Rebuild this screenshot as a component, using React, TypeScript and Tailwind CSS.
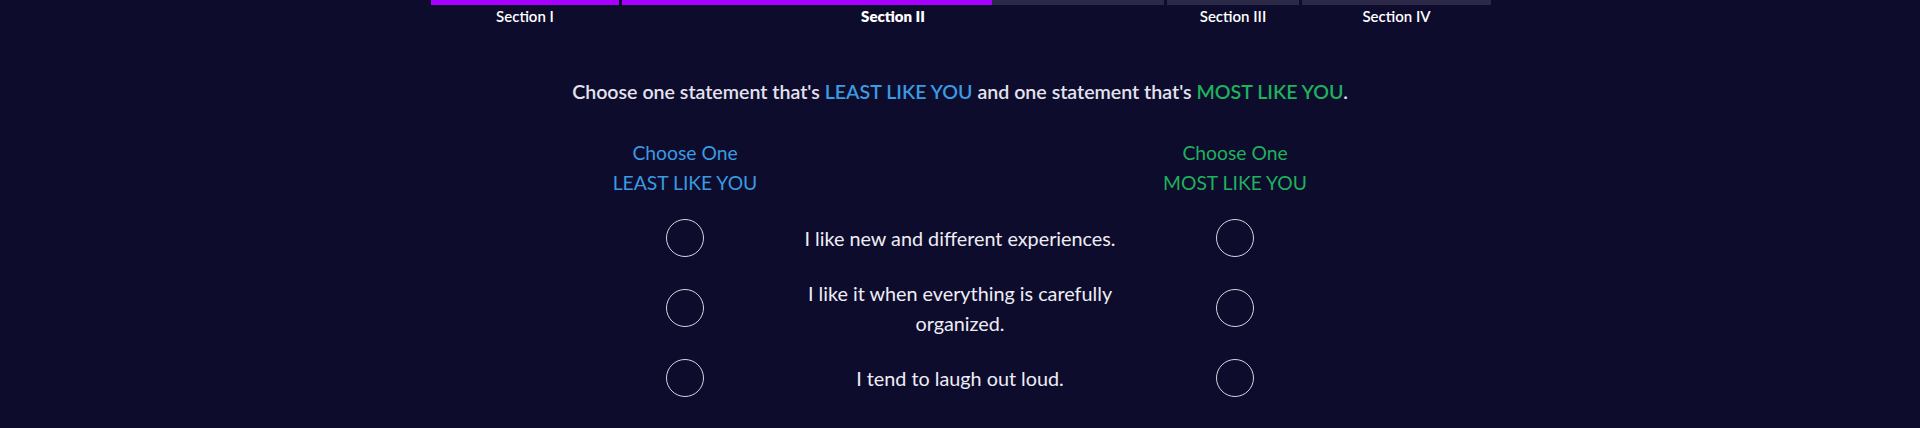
import React from "react";

const sections = [
  { label: "Section I", width: 188, fill: 100, active: false },
  { label: "Section II", width: 542, fill: 68.3, active: true },
  { label: "Section III", width: 132, fill: 0, active: false },
  { label: "Section IV", width: 189, fill: 0, active: false },
];

const statements = [
  "I like new and different experiences.",
  "I like it when everything is carefully organized.",
  "I tend to laugh out loud.",
];

function Circle() {
  return (
    <button
      type="button"
      className="w-[38px] h-[38px] rounded-full border border-[#d6d5e2] bg-transparent"
    />
  );
}

export default function App() {
  return (
    <div
      className="w-full h-[428px] bg-[#0e0c2d] text-[#e6e5f0] overflow-hidden"
      style={{ fontFamily: "Lato, 'Open Sans', sans-serif" }}
    >
      <div className="w-[1060px] flex gap-[3px] ml-[431px]">
        {sections.map((s) => (
          <div key={s.label} className="flex flex-col items-center" style={{ width: s.width }}>
            <div className="w-full h-[5px] bg-[#2b2947]">
              <div className="h-full bg-[#a800ff]" style={{ width: `${s.fill}%` }} />
            </div>
            <div
              className={`mt-[2px] text-[15px] leading-[18px] text-white ${
                s.active ? "font-extrabold" : "font-semibold"
              }`}
            >
              {s.label}
            </div>
          </div>
        ))}
      </div>

      <p className="mt-[55px] text-center text-[19.6px] leading-[24px] font-semibold text-[#e3e2ee]">
        Choose one statement that's <span className="text-[#3b9ae0]">LEAST LIKE YOU</span> and one
        statement that's <span className="text-[#1fb15c]">MOST LIKE YOU</span>.
      </p>

      <div className="mt-[34px] mx-auto w-[750px] grid grid-cols-[200px_350px_200px]">
        <div className="text-center text-[19.3px] leading-[30px] text-[#3b9ae0]">
          <div>Choose One</div>
          <div>LEAST LIKE YOU</div>
        </div>
        <div />
        <div className="text-center text-[19.3px] leading-[30px] text-[#1fb15c]">
          <div>Choose One</div>
          <div>MOST LIKE YOU</div>
        </div>

        <div className="col-span-3 h-[5px]" />

        {statements.map((s) => (
          <React.Fragment key={s}>
            <div className="h-[70px] flex items-center justify-center">
              <Circle />
            </div>
            <div className="h-[70px] flex items-center justify-center text-center text-[19.8px] leading-[30px] text-[#eeedf5]">
              {s}
            </div>
            <div className="h-[70px] flex items-center justify-center">
              <Circle />
            </div>
          </React.Fragment>
        ))}
      </div>
    </div>
  );
}
